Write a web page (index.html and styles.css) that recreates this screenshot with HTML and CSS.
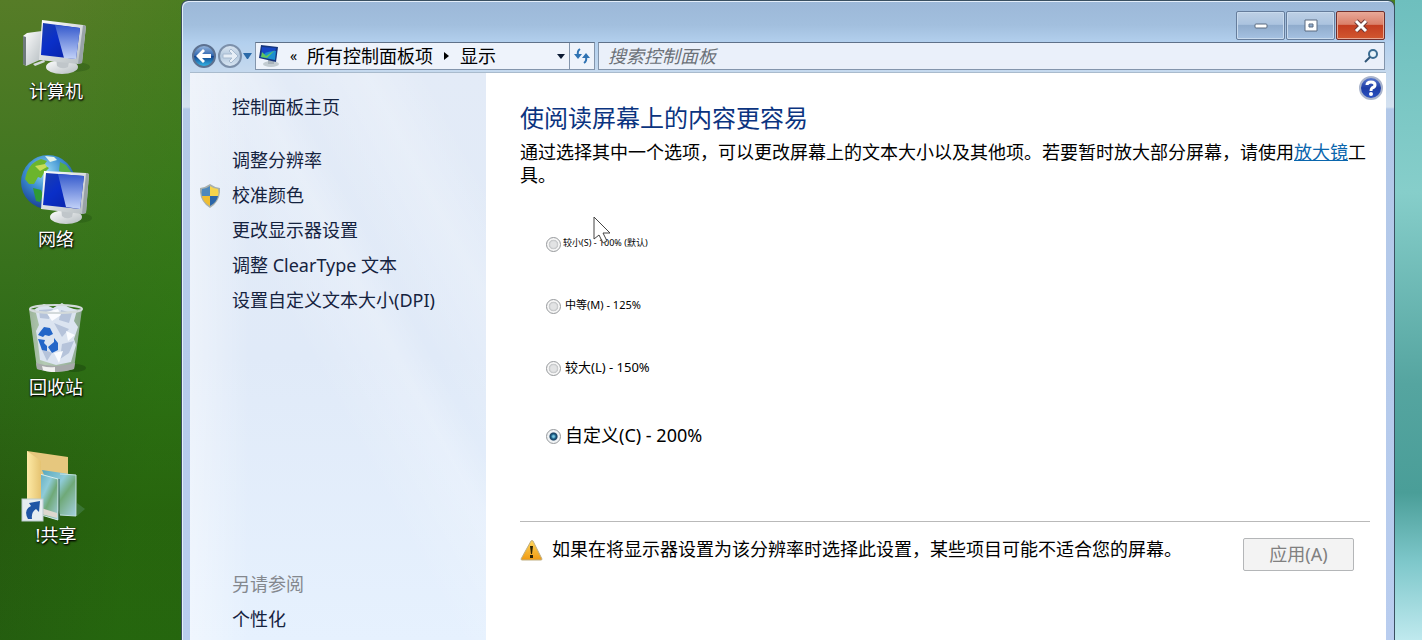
FILE: index.html
```
<!DOCTYPE html>
<html lang="zh-CN">
<head>
    <meta charset="UTF-8">
    <meta name="viewport" content="width=device-width, initial-scale=1.0">
    <title>显示</title>
    <link rel="stylesheet" href="styles.css">
</head>
<body>
    <!-- gradients shared by the icons -->
    <svg class="defs" width="0" height="0" aria-hidden="true">
        <defs>
            <linearGradient id="screen" x1="0" y1="0" x2="1" y2="1">
                <stop offset="0" stop-color="#1c3fae"/>
                <stop offset="0.4" stop-color="#0a2fc8"/>
                <stop offset="1" stop-color="#0a1f9c"/>
            </linearGradient>
            <linearGradient id="shine" x1="0" y1="0" x2="0" y2="1">
                <stop offset="0" stop-color="#3459cc"/>
                <stop offset="1" stop-color="#c3d2f8"/>
            </linearGradient>
            <linearGradient id="plastic" x1="0" y1="0" x2="1" y2="1">
                <stop offset="0" stop-color="#ffffff"/>
                <stop offset="1" stop-color="#b4bcc0"/>
            </linearGradient>
            <radialGradient id="earth" cx="0.45" cy="0.3" r="0.75">
                <stop offset="0" stop-color="#9bdcf5"/>
                <stop offset="0.45" stop-color="#3c8fd0"/>
                <stop offset="1" stop-color="#15348f"/>
            </radialGradient>
            <linearGradient id="binGlass" x1="0" y1="0" x2="1" y2="0">
                <stop offset="0" stop-color="#c9d2d2"/>
                <stop offset="0.3" stop-color="#eef3f8"/>
                <stop offset="1" stop-color="#b3c0c4"/>
            </linearGradient>
            <linearGradient id="folder" x1="0" y1="0" x2="1" y2="0">
                <stop offset="0" stop-color="#fdeaa6"/>
                <stop offset="1" stop-color="#e5c372"/>
            </linearGradient>
            <linearGradient id="photo" x1="0" y1="0" x2="1" y2="1">
                <stop offset="0" stop-color="#58a7bd"/>
                <stop offset="0.4" stop-color="#8fcbd8"/>
                <stop offset="0.6" stop-color="#6fa978"/>
                <stop offset="1" stop-color="#a5d0e2"/>
            </linearGradient>
            <linearGradient id="backFill" x1="0" y1="0" x2="0" y2="1">
                <stop offset="0" stop-color="#9dbbe0"/>
                <stop offset="0.48" stop-color="#2f66b0"/>
                <stop offset="0.5" stop-color="#123f8c"/>
                <stop offset="1" stop-color="#37c0ee"/>
            </linearGradient>
            <linearGradient id="fwdFill" x1="0" y1="0" x2="0" y2="1">
                <stop offset="0" stop-color="#dce7f2"/>
                <stop offset="0.5" stop-color="#b4c9de"/>
                <stop offset="1" stop-color="#dbe8f4"/>
            </linearGradient>
            <linearGradient id="helpFill" x1="0" y1="0" x2="0" y2="1">
                <stop offset="0" stop-color="#5c7cd2"/>
                <stop offset="0.5" stop-color="#1d3da6"/>
                <stop offset="1" stop-color="#2b52c4"/>
            </linearGradient>
            <linearGradient id="warnFill" x1="0" y1="0" x2="0" y2="1">
                <stop offset="0" stop-color="#ffd65c"/>
                <stop offset="1" stop-color="#f09a12"/>
            </linearGradient>
        </defs>
    </svg>

    <div class="desktop">
        <nav class="shortcuts">
            <a class="shortcut" href="#">
                <svg width="80" height="74" viewBox="0 0 80 74" aria-hidden="true">
                    <ellipse cx="58" cy="62" rx="16" ry="5" fill="#1d4a10" opacity="0.3"/>
                    <path d="M7 31 L11 28 L26 26 V54 L10 61 L7 59Z" fill="url(#plastic)"/>
                    <path d="M7 31 L10 32 V61 L7 59Z" fill="#6f7a7c"/>
                    <path d="M17 59 L28 55 L29 57 L19 61Z" fill="#d5dadb"/>
                    <ellipse cx="46" cy="62" rx="16" ry="7" fill="url(#plastic)"/>
                    <path d="M40 52 H54 L52 62 Q46 65 41 61Z" fill="#c0c6ca"/>
                    <path d="M26 15 L67 20 L70 21 L66 58 L62 59 L23 55Z" fill="url(#plastic)"/>
                    <path d="M67 20 L70 21 L66 58 L62 59Z" fill="#99a3a7"/>
                    <path d="M27 18 L64 23 L60 54 L25 50Z" fill="url(#screen)"/>
                    <path d="M39 20 L64 23 L60 54 L48 53Z" fill="url(#shine)"/>
                </svg>
                <span>计算机</span>
            </a>
            <a class="shortcut" href="#">
                <svg width="80" height="74" viewBox="0 0 80 74" aria-hidden="true">
                    <circle cx="32" cy="29" r="27" fill="url(#earth)"/>
                    <path d="M11 19 Q15 9 25 6 L31 8 L28 12 L33 15 L28 20 L25 25 L22 24 L18 31 L13 31 L9 26Z" fill="#6bb52d"/>
                    <path d="M17 35 L25 37 L27 42 L24 49 L20 48Z" fill="#2f9a35"/>
                    <path d="M29 3 L38 4 L41 7 L34 9Z" fill="#e4f3ea"/>
                    <path d="M44 9 L50 12 L56 20 L49 21 L43 18Z" fill="#57ad45"/>
                    <path d="M19 13 L29 11 L31 14 L24 18Z" fill="#c8dd59"/>
                    <ellipse cx="62" cy="65" rx="14" ry="5" fill="#1d4a10" opacity="0.3"/>
                    <ellipse cx="50" cy="64" rx="16" ry="7" fill="url(#plastic)"/>
                    <path d="M45 54 H58 L56 64 Q50 67 46 63Z" fill="#c0c6ca"/>
                    <path d="M28 18 L70 20 L73 21 L70 60 L66 61 L25 56Z" fill="url(#plastic)"/>
                    <path d="M70 20 L73 21 L70 60 L66 61Z" fill="#99a3a7"/>
                    <path d="M30 20 L68 23 L64 56 L27 52Z" fill="url(#screen)"/>
                    <path d="M42 21 L68 23 L64 56 L50 54Z" fill="url(#shine)"/>
                </svg>
                <span>网络</span>
            </a>
            <a class="shortcut" href="#">
                <svg width="80" height="74" viewBox="0 0 80 74" aria-hidden="true">
                    <ellipse cx="58" cy="67" rx="12" ry="4" fill="#163c0d" opacity="0.4"/>
                    <path d="M13 8 H66 L58 68 Q40 74 21 68Z" fill="url(#binGlass)" opacity="0.7"/>
                    <path d="M19 8 L28 3 L37 7 L46 2 L52 6 L61 9 L58 20 L62 26 L58 38 L60 44 L55 61 L40 64 L24 59 L22 42 L20 30 L23 24Z" fill="#dbe4f0"/>
                    <path d="M23 9 L37 8 L33 18 L24 17Z M45 9 L56 12 L53 22 L43 19Z M38 22 L53 28 L46 36Z M25 47 L36 52 L31 60Z M46 43 L58 40 L53 52 L44 58Z" fill="#b5c3da"/>
                    <path d="M30 11 L42 8 L45 14 L36 20Z M50 30 L59 34 L52 40Z M38 52 L47 50 L43 62Z" fill="#fafcff"/>
                    <path d="M24 31 L28 26 L34 27 L37 33 L33 35 L29 34 L27 36 L22 34Z M32 46 L38 41 L38 37 L42 42 L42 49 L36 52Z M22 38 L29 39 L28 42 L31 45 L31 50 L26 49Z" fill="#2366c8"/>
                    <path d="M20 62 Q39 68 59 62 L58 68 Q40 74 21 68Z" fill="#a6a9aa"/>
                    <path d="M26 65 Q33 67 39 66 V71 Q31 71 27 69Z" fill="#f1f1f1"/>
                    <ellipse cx="40" cy="8" rx="26" ry="4" fill="none" stroke="#d3dadb" stroke-width="2"/>
                </svg>
                <span>回收站</span>
            </a>
            <a class="shortcut" href="#">
                <svg width="80" height="74" viewBox="0 0 80 74" aria-hidden="true">
                    <path d="M61 67 L69 60 L61 54Z" fill="#69a38f" opacity="0.3"/>
                    <path d="M11 2 L52 8 V60 H11Z" fill="#e6c77e"/>
                    <path d="M26 21 L60 26 V67 L44 66Z" fill="url(#photo)"/>
                    <path d="M44 25 L60 26 V67 L44 66" fill="none" stroke="#c2e0e2" stroke-width="1"/>
                    <path d="M20 24 L42 30 V71 L22 65Z" fill="url(#photo)" stroke="#d7ecee" stroke-width="1"/>
                    <path d="M43 30 V71" stroke="#2f5a4c"/>
                    <path d="M25 59 L41 64 V69 L25 65Z" fill="#ddd7cf"/>
                    <path d="M11 2 L25 12 V52 L21 62 L11 58Z" fill="url(#folder)"/>
                    <rect x="6" y="50" width="21" height="22" fill="#e6edf1" stroke="#bccbd0"/>
                    <path d="M12 70 Q7 61 15 57 L13 54 L24 52 L23 63 L20 60 Q15 63 16 70Z" fill="#1f55a5"/>
                </svg>
                <span>!共享</span>
            </a>
        </nav>

        <main class="window">
            <header class="titlebar">
                <button type="button" class="caption" aria-label="最小化">
                    <svg width="16" height="14" viewBox="0 0 16 14"><rect x="2" y="5" width="12" height="4" rx="1" fill="#fff" stroke="#5b6b80"/></svg>
                </button>
                <button type="button" class="caption" aria-label="最大化">
                    <svg width="16" height="14" viewBox="0 0 16 14"><path d="M2 1 H14 V12 H2Z M6 5 V8 H10 V5Z" fill="#fff" fill-rule="evenodd" stroke="#5b6b80"/></svg>
                </button>
                <button type="button" class="caption close" aria-label="关闭">
                    <svg width="16" height="14" viewBox="0 0 16 14"><path d="M3 2 L13 12 M13 2 L3 12" stroke="#6b3a37" stroke-width="5"/><path d="M3 2 L13 12 M13 2 L3 12" stroke="#fff" stroke-width="3"/></svg>
                </button>
            </header>

            <div class="toolbar">
                <div class="history">
                    <button type="button" class="plain" aria-label="后退">
                        <svg width="26" height="26" viewBox="0 0 26 26"><circle cx="13" cy="13" r="11" fill="url(#backFill)" stroke="#5c7190" stroke-width="2"/><path d="M5 13 L12 6 L14 8 L11 11 H20 V15 H11 L14 18 L12 20Z" fill="#fff"/></svg>
                    </button>
                    <button type="button" class="plain" aria-label="前进">
                        <svg width="26" height="26" viewBox="0 0 26 26"><circle cx="13" cy="13" r="11" fill="url(#fwdFill)" stroke="#7c90aa" stroke-width="2"/><path d="M21 13 L14 6 L12 8 L15 11 H6 V15 H15 L12 18 L14 20Z" fill="#e6eef6" stroke="#a7bacf" stroke-width="1"/></svg>
                    </button>
                    <button type="button" class="plain" aria-label="最近的页面">
                        <svg width="9" height="6" viewBox="0 0 9 6"><path d="M0 0 H9 L5 6 H4Z" fill="#2b6aa8"/></svg>
                    </button>
                </div>
                <div class="address">
                    <svg class="place" width="22" height="24" viewBox="0 0 22 24" aria-hidden="true">
                        <ellipse cx="13" cy="20" rx="8" ry="3" fill="#c3ccd2"/>
                        <path d="M10 15 H16 V20 H10Z" fill="#a8b2ba"/>
                        <path d="M3 1 L20 3 L18 18 L1 14Z" fill="#17367e"/>
                        <path d="M4 3 L18 4 L17 10 Q9 9 3 13Z" fill="#1747c4"/>
                        <path d="M2 13 Q9 6 18 7 L17 16Z" fill="#1c8fd0"/>
                        <path d="M4 8 L8 12 L17 6 L9 14 L3 13Z" fill="#62c75b"/>
                    </svg>
                    <span class="more">«</span>
                    <a href="#">所有控制面板项</a>
                    <svg class="chevron" width="5" height="8" viewBox="0 0 5 8" aria-hidden="true"><path d="M0 0 L5 4 L0 8Z" fill="#000"/></svg>
                    <a href="#">显示</a>
                    <button type="button" class="plain drop" aria-label="以前的位置">
                        <svg width="8" height="5" viewBox="0 0 8 5"><path d="M0 0 H8 L4 5Z" fill="#0b1a33"/></svg>
                    </button>
                    <button type="button" class="plain refresh" aria-label="刷新">
                        <svg width="16" height="16" viewBox="0 0 16 16"><path d="M6 1 Q3 3 4 7 M10 15 Q13 13 12 9" fill="none" stroke="#3073b3" stroke-width="2"/><path d="M0 6 H8 L4 11Z M8 10 H16 L12 5Z" fill="#3073b3"/></svg>
                    </button>
                </div>
                <form class="search" onsubmit="return false;">
                    <input type="text" placeholder="搜索控制面板" aria-label="搜索控制面板">
                    <button type="submit" class="plain" aria-label="搜索">
                        <svg width="14" height="14" viewBox="0 0 14 14"><circle cx="9" cy="5" r="4" fill="#e8f3fa" stroke="#3a6c92" stroke-width="2"/><path d="M6 8 L1 13" stroke="#2f5577" stroke-width="2"/></svg>
                    </button>
                </form>
            </div>

            <div class="client">
                <aside class="sidebar">
                    <a class="home" href="#">控制面板主页</a>
                    <a href="#">调整分辨率</a>
                    <a class="shielded" href="#">
                        <svg width="20" height="24" viewBox="0 0 20 24" aria-hidden="true">
                            <path d="M10 0 Q14 3 20 4 Q21 17 10 24 Q-1 17 0 4 Q6 3 10 0Z" fill="#a9b0ab"/>
                            <path d="M10 2 V12 H2 Q1 9 2 5 Q6 5 10 2Z" fill="#4d88bd"/>
                            <path d="M10 2 Q14 5 18 5 Q19 9 18 12 H10Z" fill="#f6d44c"/>
                            <path d="M2 12 H10 V22 Q3 18 2 12Z" fill="#efbd31"/>
                            <path d="M10 12 H18 Q17 18 10 22Z" fill="#2c66a8"/>
                        </svg>
                        校准颜色
                    </a>
                    <a href="#">更改显示器设置</a>
                    <a href="#">调整 ClearType 文本</a>
                    <a href="#">设置自定义文本大小(DPI)</a>
                    <h2>另请参阅</h2>
                    <a href="#">个性化</a>
                </aside>

                <section class="content">
                    <button type="button" class="plain help" aria-label="帮助">
                        <svg width="24" height="24" viewBox="0 0 24 24"><circle cx="12" cy="12" r="11" fill="url(#helpFill)" stroke="#a9b4cc" stroke-width="2"/><path d="M8 9 Q8 6 12 6 Q16 6 16 9 Q16 11 13 12 Q12 13 12 15" fill="none" stroke="#fff" stroke-width="3"/><circle cx="12" cy="18" r="2" fill="#fff"/></svg>
                    </button>
                    <h1>使阅读屏幕上的内容更容易</h1>
                    <p>通过选择其中一个选项，可以更改屏幕上的文本大小以及其他项。若要暂时放大部分屏幕，请使用<a href="#">放大镜</a>工具。</p>

                    <form onsubmit="return false;">
                        <div class="options">
                            <label class="smaller"><input type="radio" name="scale">较小(S) - 100% (默认)</label>
                            <label class="medium"><input type="radio" name="scale">中等(M) - 125%</label>
                            <label class="larger"><input type="radio" name="scale">较大(L) - 150%</label>
                            <label class="custom"><input type="radio" name="scale" checked>自定义(C) - 200%</label>
                            <svg class="pointer" width="18" height="28" viewBox="0 0 18 28" aria-hidden="true">
                                <path d="M1 1 V23 L6 19 L10 27 L14 25 L10 17 H17Z" fill="#fff" fill-opacity="0.85" stroke="#444"/>
                            </svg>
                        </div>
                        <footer class="apply">
                            <svg width="23" height="21" viewBox="0 0 23 21" aria-hidden="true">
                                <path d="M11 1 Q12 0 13 1 L22 19 Q22 20 21 20 H2 Q1 20 1 19Z" fill="url(#warnFill)" stroke="#c0b084"/>
                                <path d="M10 6 H13 L12 14 H11Z M10 15 H13 V18 H10Z" fill="#2b2206"/>
                            </svg>
                            <span>如果在将显示器设置为该分辨率时选择此设置，某些项目可能不适合您的屏幕。</span>
                            <button type="submit" disabled>应用(A)</button>
                        </footer>
                    </form>
                </section>
            </div>
        </main>
    </div>
</body>
</html>
```
FILE: styles.css
```
* {
    box-sizing: border-box;
}
body {
    margin: 0;
    font-family: "Noto Sans", "Noto Sans CJK SC", sans-serif;
    font-size: 18px;
    color: #000;
}
a {
    color: inherit;
    text-decoration: none;
}
svg {
    display: block;
    flex: none;
}
.defs {
    position: absolute;
}
.plain {
    padding: 0;
    border: 0;
    background: none;
}
.desktop {
    display: flex;
    min-height: 100vh;
    padding-right: 27px;
    background:
        linear-gradient(#6ebfbe, #86ceca 30%, #55a5a0 60%, #4a9e98 77%, #7fc8cb 88%, #bfe9ee) right / 27px 100% no-repeat,
        linear-gradient(100deg, transparent 4%, rgba(40, 130, 10, 0.3) 15%) no-repeat,
        linear-gradient(#567c27, #3f7620 30%, #2f6b17 55%, #27590f 80%, #245a10);
}

/* desktop icons */
.shortcuts {
    width: 181px;
    flex: none;
    padding: 5px 69px 0 0;
}
.shortcut {
    display: flex;
    flex-direction: column;
    align-items: center;
    margin-bottom: 50px;
    line-height: 24px;
    color: #fff;
    text-shadow: 1px 1px 2px #000, 0 1px 2px #000;
}

/* window frame */
.window {
    display: flex;
    flex-direction: column;
    flex: 1;
    min-width: 0;
    padding: 0 8px;
    border: 1px solid #3a5061;
    border-bottom: 0;
    border-radius: 7px 7px 0 0;
    background: linear-gradient(#9cb8d8, #a2bfde 24px, #b3d0ee 42px, #c5d9ee 70px, #d4e1f0 106px, #b2c8e8 108px, #b9cdef);
    box-shadow: inset 1px 1px 0 #e3eefa;
}
.titlebar {
    display: flex;
    justify-content: flex-end;
    gap: 1px;
    height: 41px;
    padding: 10px 1px 2px 0;
}
.caption {
    display: flex;
    align-items: center;
    justify-content: center;
    width: 49px;
    padding: 0;
    border: 1px solid #667d9c;
    border-radius: 2px;
    background: linear-gradient(#bed0e5, #abc3df 46%, #8fabcc 48%, #a6c2e2);
    box-shadow: inset 0 0 0 1px #c9dbee;
}
.caption.close {
    border-color: #702f2e;
    background: linear-gradient(#e8a899, #da8069 46%, #c33d20 48%, #d2572f);
    box-shadow: inset 0 0 0 1px #e8a994;
}
.toolbar {
    display: flex;
    gap: 3px;
    height: 28px;
    margin-bottom: 3px;
    padding-right: 1px;
}
.history {
    display: flex;
    align-items: center;
    width: 62px;
    padding-left: 1px;
}
.address {
    display: flex;
    align-items: center;
    flex: 0 1 340px;
    padding-left: 2px;
    border: 1px solid #8395ac;
    border-top-color: #5f7189;
    background: #eef3fb;
    white-space: nowrap;
    line-height: 28px;
}
.place {
    margin-right: 10px;
}
.more {
    width: 17px;
    font-size: 14px;
}
.chevron {
    margin: 0 11px;
}
.drop {
    margin-left: auto;
    padding: 0 4px;
}
.refresh {
    display: flex;
    align-items: center;
    justify-content: center;
    align-self: stretch;
    width: 25px;
    border-left: 1px solid #8395ac;
}
.search {
    display: flex;
    align-items: center;
    flex: 1;
    min-width: 0;
    padding: 0 6px 0 9px;
    border: 1px solid #8395ac;
    border-top-color: #5f7189;
    background: #eaf0fa;
}
.search input {
    flex: 1;
    min-width: 0;
    padding: 0;
    border: 0;
    outline: none;
    background: none;
    font: inherit;
    font-style: italic;
    line-height: 26px;
}
.search input::placeholder {
    color: #6c7178;
    opacity: 1;
}
.client {
    display: flex;
    flex: 1;
    background: #fff;
    box-shadow: 0 -1px 0 #a9bbcd;
}

/* task links */
.sidebar {
    display: flex;
    flex-direction: column;
    flex: none;
    width: 296px;
    padding: 17px 0 3px 42px;
    background:
        linear-gradient(90deg, rgba(255, 255, 255, 0.4), transparent 20%),
        linear-gradient(62deg, transparent 45%, rgba(255, 255, 255, 0.2) 60%, transparent 66%, rgba(255, 255, 255, 0.2) 80%, transparent 90%),
        linear-gradient(#e3ebf7, #e0eaf8 50%, #e6f1fe);
    line-height: 35px;
    color: #15233f;
}
.home {
    margin-bottom: 18px;
}
.shielded {
    display: flex;
    align-items: center;
    gap: 12px;
    margin-left: -32px;
}
.sidebar h2 {
    margin: auto 0 0;
    font-size: 18px;
    font-weight: normal;
    color: #84888e;
}

/* display settings */
.content {
    display: flex;
    flex-direction: column;
    flex: 1;
    min-width: 0;
    padding: 3px 16px 0 34px;
}
.help {
    align-self: flex-end;
    margin-right: -13px;
}
.content h1 {
    margin: 4px 0 9px;
    font-size: 24px;
    font-weight: normal;
    line-height: 28px;
    color: #0b3480;
}
.content p {
    margin: 0;
    line-height: 23px;
}
.content p a {
    color: #0a66ad;
    text-decoration: underline;
}
.options {
    position: relative;
    display: grid;
    justify-items: start;
    gap: 38px;
    padding: 44px 0 68px 26px;
}
.options label {
    display: flex;
    align-items: center;
    gap: 4px;
    line-height: 24px;
}
.options input {
    appearance: none;
    width: 15px;
    height: 15px;
    margin: 2px 0 0;
    border: 1px solid #96999c;
    border-radius: 50%;
    background: radial-gradient(circle, #e2e3e4 30%, #c4c6c8 48%, #f6f6f6 56%);
}
.options input:checked {
    background: radial-gradient(circle at 50% 50%, #7cc9e4 8%, #1b5f86 26%, #173f60 38%, #f0f3f5 50%);
}
.options .smaller {
    gap: 2px;
    font-size: 9px;
}
.medium {
    font-size: 11px;
}
.larger {
    font-size: 13px;
}
.options .custom {
    line-height: 36px;
}
.pointer {
    position: absolute;
    left: 73px;
    top: 29px;
}
.apply {
    display: flex;
    align-items: flex-start;
    padding: 16px 16px 0 0;
    border-top: 1px solid #b9b9b9;
    line-height: 23px;
}
.apply svg {
    margin: 2px 9px 0 0;
}
.apply button {
    width: 111px;
    height: 33px;
    margin-left: auto;
    padding: 0;
    border: 1px solid #b4b6b8;
    border-radius: 2px;
    background: #f3f3f3;
    font: inherit;
    color: #808080;
}
```
